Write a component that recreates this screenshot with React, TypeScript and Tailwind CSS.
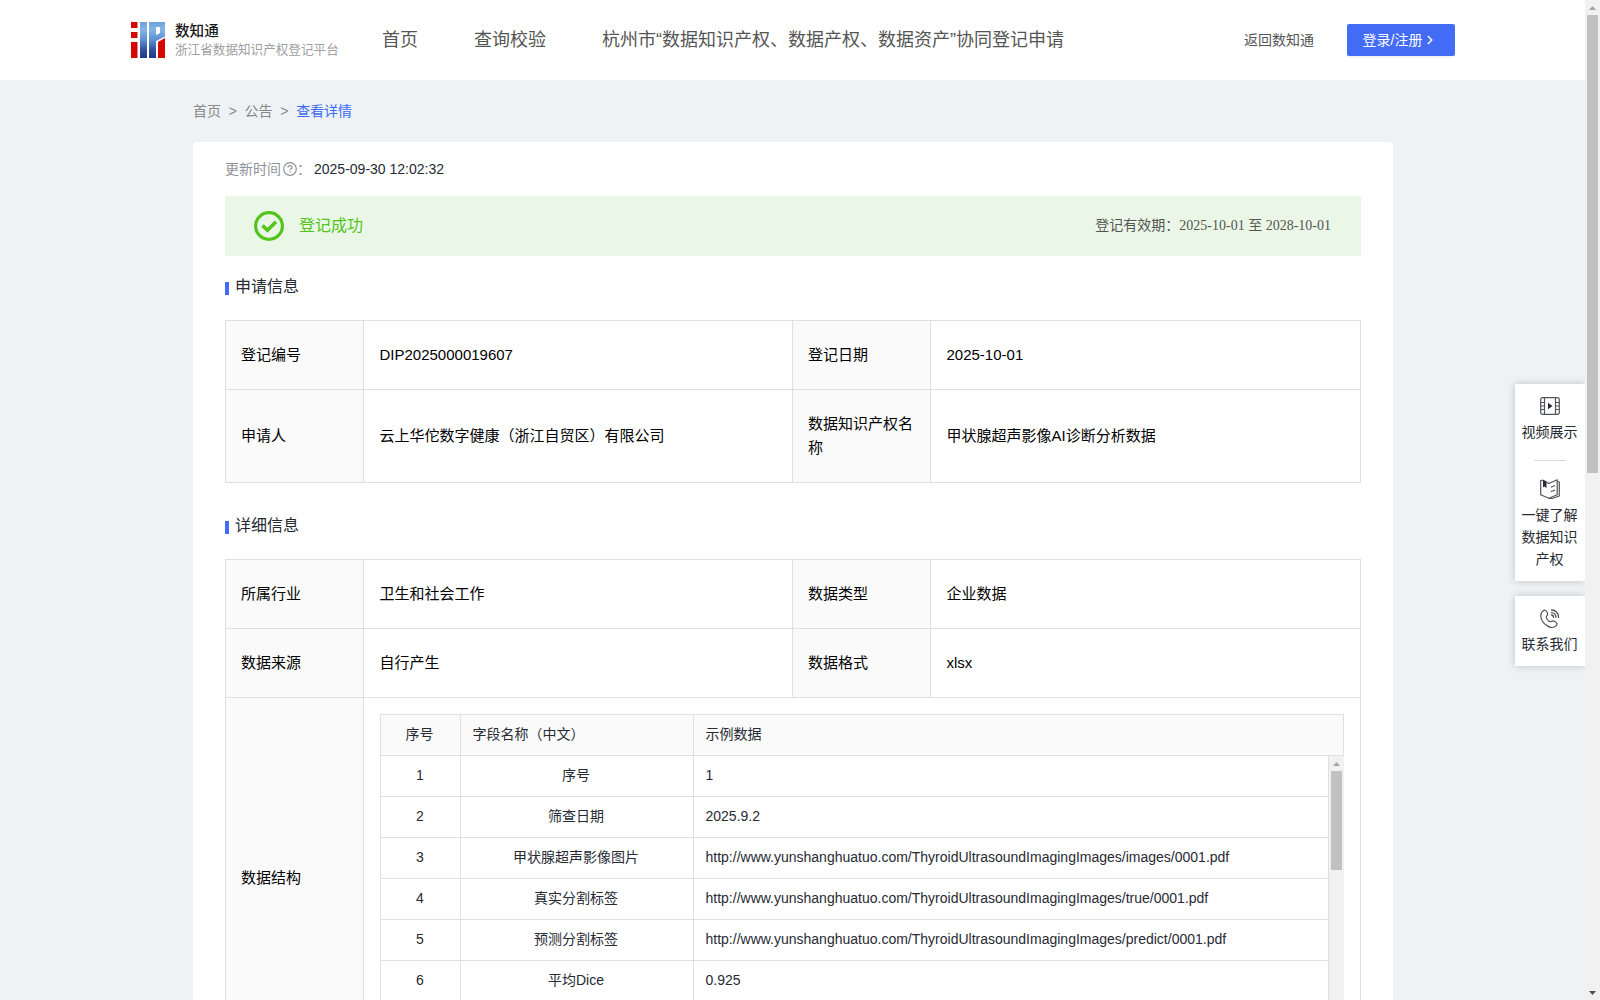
import React from 'react';

type Row = [string, string, string];

const rows: Row[] = [
  ['1', '序号', '1'],
  ['2', '筛查日期', '2025.9.2'],
  ['3', '甲状腺超声影像图片', 'http://www.yunshanghuatuo.com/ThyroidUltrasoundImagingImages/images/0001.pdf'],
  ['4', '真实分割标签', 'http://www.yunshanghuatuo.com/ThyroidUltrasoundImagingImages/true/0001.pdf'],
  ['5', '预测分割标签', 'http://www.yunshanghuatuo.com/ThyroidUltrasoundImagingImages/predict/0001.pdf'],
  ['6', '平均Dice', '0.925'],
];

function Logo() {
  return (
    <svg width="34" height="36" viewBox="0 0 34 36" className="shrink-0">
      <defs>
        <linearGradient id="blue" x1="0" y1="0" x2="0" y2="36" gradientUnits="userSpaceOnUse">
          <stop offset="0" stopColor="#6f9fd8" />
          <stop offset="0.2" stopColor="#85b4e8" />
          <stop offset="0.5" stopColor="#5c8fd0" />
          <stop offset="0.8" stopColor="#2d4d9b" />
          <stop offset="1" stopColor="#233a86" />
        </linearGradient>
      </defs>
      <path d="M0 0h6.500v6H0zM0 10h6.500v6H0zM0 20h6.500v16H0z" fill="#d40606" />
      <path d="M9 0h7v36H9z" fill="url(#blue)" />
      <path d="M18 0h16v14.500L25 19v17h-7zM25 5v8l4-2V5z" fill="url(#blue)" fillRule="evenodd" />
      <path d="M27 20l7-4v20h-7z" fill="#d40606" />
    </svg>
  );
}

function Section({ title }: { title: string }) {
  return (
    <div className="flex h-6 items-center">
      <span className="mt-[3px] h-[13px] w-1 bg-[#436cf6]" />
      <h2 className="ml-1.5 text-base leading-6 text-[#272a33]">{title}</h2>
    </div>
  );
}

function Label({ children }: { children: React.ReactNode }) {
  return (
    <div className="flex items-center border-r border-b border-[#e0e0e0] bg-[#fafafa] pr-4 pb-px pl-[15px]">
      <span>{children}</span>
    </div>
  );
}

function Value({ children }: { children: React.ReactNode }) {
  return <div className="flex items-center border-r border-b border-[#e0e0e0] px-[15.500px] pb-px">{children}</div>;
}

function Arrow({ down = false }: { down?: boolean }) {
  return (
    <svg width="15" height="15" viewBox="0 0 15 15" className="shrink-0">
      <path d={down ? 'M4 6h7l-3.500 4z' : 'M4 10h7L7.500 6z'} fill={down ? '#505050' : '#a3a3a3'} />
    </svg>
  );
}

function VideoIcon() {
  return (
    <svg width="20" height="18" viewBox="0 0 20 18" fill="none" stroke="#50535b" strokeWidth="1.200">
      <rect x="0.700" y="0.700" width="18.600" height="16.600" rx="2" />
      <path d="M4.500 1v16M15.500 1v16M1 5.500h3.500M1 9h3.500M1 12.500h3.500M15.500 5.500H19M15.500 9H19M15.500 12.500H19" />
      <path d="M8 5.800v6.400l4.500-3.200z" fill="#272a33" stroke="none" />
    </svg>
  );
}

function BookIcon() {
  return (
    <svg width="20" height="20" viewBox="0 0 20 20" fill="none" stroke="#50535b" strokeWidth="1.200" strokeLinejoin="round">
      <path d="M3 1.200L.7 1.500v14.200l8.100 3.600 8.400-3.600V.8L8.800 4.500 6.500 3" />
      <path d="M17.200 2.500l2.100.5v14l-6.500 2.300-4 .2M10.800 8.300l4.200-1.800M10.800 12.800l4.200-1.800" />
      <path d="M3 .8l3.500 1.400v7L4.700 7.500 3 8.200z" fill="#272a33" stroke="none" />
    </svg>
  );
}

function PhoneIcon() {
  return (
    <svg width="20" height="20" viewBox="0 0 20 20" fill="none" stroke="#50535b" strokeWidth="1.200" strokeLinecap="round" strokeLinejoin="round">
      <path d="M3 2c1.500-1.500 3-.8 4 1 1 1.700 1 2.500-.2 3.800-1 1-.7 1.800.5 3.500 1.300 1.700 2.700 2.800 3.700 2.300 1.300-.8 2-1.200 3.800-.2 2.500 1.400 3 2.400 1.400 4.200-2 2.200-4.700 2.500-8 .8C4 15.200 1.500 11.500.9 8 .5 5.300 1 3.500 3 2z" />
      <path d="M11.500 1c4 0 7 3.200 7 7.200M11.500 3.600c2.500 0 4.400 2 4.400 4.600M11.500 6c1.200 0 2 .9 2 2.200" strokeWidth="1.400" />
    </svg>
  );
}

export default function App() {
  return (
    <div
      className="relative flex h-[1000px] w-[1600px] overflow-hidden bg-[#eef2f5] text-sm text-[#272a33]"
      style={{ fontFamily: '"Liberation Sans", "Noto Sans CJK SC", sans-serif' }}
    >
      <div className="h-full w-[1585px] shrink-0 overflow-hidden">
        <header className="flex h-20 items-center bg-white pr-[130px] pl-[131px]">
          <Logo />
          <div className="ml-2.5 w-[197px] whitespace-nowrap">
            <div className="text-[14.600px] leading-5 font-medium text-[#181818]">数知通</div>
            <div className="text-[12.600px] leading-[19px] text-[#a0a0a3]">浙江省数据知识产权登记平台</div>
          </div>
          <nav className="ml-[10px] flex gap-14 text-lg leading-6 whitespace-nowrap text-[#555]">
            <a>首页</a>
            <a>查询校验</a>
            <a>杭州市“数据知识产权、数据产权、数据资产”协同登记申请</a>
          </nav>
          <a className="ml-auto text-[#555]">返回数知通</a>
          <button className="ml-[33px] flex h-8 w-[108px] items-center rounded-xs bg-[#436cf6] pb-px pl-[15.500px] whitespace-nowrap text-white shadow-[0_2px_0_rgba(0,0,0,0.045)]">
            登录/注册
            <svg width="6" height="10" viewBox="0 0 6 10" className="ml-[5px]" fill="none" stroke="white" strokeWidth="1.400">
              <path d="M.8 1l4 4-4 4" />
            </svg>
          </button>
        </header>

        <main className="ml-[193px] w-[1200px]">
          <div className="flex h-[61px] items-center gap-[7.700px] text-[#888]">
            <span>首页</span>
            <span>&gt;</span>
            <span>公告</span>
            <span>&gt;</span>
            <span className="text-[#3a6af8]">查看详情</span>
          </div>

          <div className="mt-px h-[1200px] rounded-t bg-white px-8 pt-4">
            <div className="flex h-[22px] items-center text-[#909399]">
              <span>更新时间</span>
              <svg width="14" height="14" viewBox="0 0 14 14" className="ml-0.5" fill="none" stroke="#909399" strokeWidth="1.200">
                <circle cx="7" cy="7" r="6.300" />
                <path d="M5 5.600C5 3 9 3 9 5.400c0 1.300-2 1.500-2 2.900M7 9.300v1.200" />
              </svg>
              <span className="w-[17px]">：</span>
              <span className="text-[#272a33]">2025-09-30 12:02:32</span>
            </div>

            <div className="mt-4 flex h-[60px] items-center bg-[#ebf7e6] pr-[30px] pl-[29px]">
              <svg width="30" height="30" viewBox="0 0 30 30" fill="none" stroke="#52c41a">
                <circle cx="15" cy="15" r="13.400" strokeWidth="3.200" />
                <path d="M8.500 14.500l5 4.700 8.500-8.500" strokeWidth="3.600" />
              </svg>
              <span className="ml-[15px] text-base text-[#52c41a]">登记成功</span>
              <span className="ml-auto font-['Liberation_Serif','Noto_Sans_CJK_SC',serif] text-[#555]">
                登记有效期：2025-10-01 至 2028-10-01
              </span>
            </div>

            <div className="mt-[19px]">
              <Section title="申请信息" />
            </div>
            <div className="mt-[21px] grid grid-cols-[138px_429px_138px_430px] grid-rows-[69px_93px] border-t border-l border-[#e0e0e0] text-[15px] leading-6 text-black">
              <Label>登记编号</Label>
              <Value>DIP2025000019607</Value>
              <Label>登记日期</Label>
              <Value>2025-10-01</Value>
              <Label>申请人</Label>
              <Value>云上华佗数字健康（浙江自贸区）有限公司</Value>
              <Label>数据知识产权名称</Label>
              <Value>甲状腺超声影像AI诊断分析数据</Value>
            </div>

            <div className="mt-[31px]">
              <Section title="详细信息" />
            </div>
            <div className="mt-[21px] grid grid-cols-[138px_429px_138px_430px] grid-rows-[69px_69px_362px] border-t border-l border-[#e0e0e0] text-[15px] leading-6 text-black">
              <Label>所属行业</Label>
              <Value>卫生和社会工作</Value>
              <Label>数据类型</Label>
              <Value>企业数据</Value>
              <Label>数据来源</Label>
              <Value>自行产生</Value>
              <Label>数据格式</Label>
              <Value>xlsx</Value>
              <Label>数据结构</Label>
              <div className="col-span-3 overflow-hidden border-r border-b border-[#e0e0e0] px-4 pt-4 text-sm text-[#272a33]">
                <div className="grid h-[42px] grid-cols-[80px_233px_1fr] items-stretch border border-[#e0e0e0] bg-[#fafafa] leading-[39px]">
                  <div className="border-r border-[#e0e0e0] pr-[2px] text-center">序号</div>
                  <div className="border-r border-[#e0e0e0] pl-[11.500px]">字段名称（中文）</div>
                  <div className="pl-[11.500px]">示例数据</div>
                </div>
                <div className="flex">
                  <div className="flex-1 border-l border-[#e0e0e0]">
                    {rows.map(([n, name, sample]) => (
                      <div key={n} className="grid h-[41px] grid-cols-[80px_233px_1fr] leading-[39px]">
                        <div className="border-r border-b border-[#e0e0e0] pr-[1px] text-center">{n}</div>
                        <div className="border-r border-b border-[#e0e0e0] pr-[2px] text-center">{name}</div>
                        <div className="border-r border-b border-[#e0e0e0] pl-[11.500px]">{sample}</div>
                      </div>
                    ))}
                  </div>
                  <div className="flex w-[15px] flex-col items-center bg-[#f1f1f1]">
                    <Arrow />
                    <div className="h-[99px] w-[11px] bg-[#c1c1c1]" />
                  </div>
                </div>
              </div>
            </div>
          </div>
        </main>
      </div>

      <div className="flex h-full w-[15px] flex-col items-center bg-[#f1f1f1]">
        <Arrow />
        <div className="h-[458px] w-[11px] bg-[#c1c1c1]" />
        <div className="mt-auto h-[15px]">
          <Arrow down />
        </div>
      </div>

      <div className="absolute top-0 right-[15px] h-full w-[85px] overflow-hidden pt-[384px] pl-[15px] text-center leading-[22px]">
        <div className="flex h-[197px] flex-col items-center bg-white pt-[13px] shadow-[0_0_8px_rgba(0,0,0,0.2)]">
          <VideoIcon />
          <span className="mt-1.5 mr-px">视频展示</span>
          <span className="mt-[17px] h-px w-8 shrink-0 bg-[#dcdcdc]" />
          <span className="mt-[18px] h-5">
            <BookIcon />
          </span>
          <span className="mt-[5px] mr-px w-14">一键了解数据知识产权</span>
        </div>
        <div className="mt-[15px] flex h-[70px] flex-col items-center bg-white pt-[13px] shadow-[0_0_8px_rgba(0,0,0,0.2)]">
          <PhoneIcon />
          <span className="mt-1 mr-px">联系我们</span>
        </div>
      </div>
    </div>
  );
}
